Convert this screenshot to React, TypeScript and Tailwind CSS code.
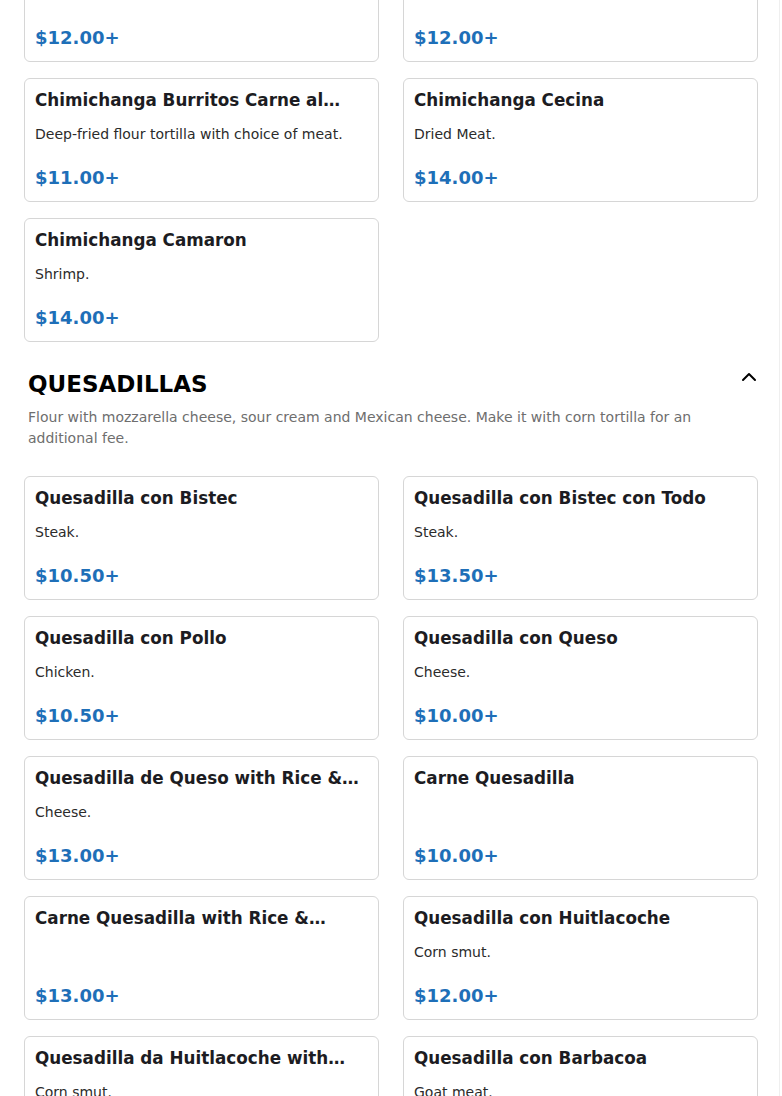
import React from 'react';
import { ChevronUp } from 'lucide-react';

type MenuItem = {
  name: string;
  description?: string;
  price: string;
};

type MenuSection = {
  title?: string;
  description?: string;
  items: MenuItem[];
};

const sections: MenuSection[] = [
  {
    items: [
      { name: 'Chimichanga de Pollo', description: 'Chicken.', price: '$12.00+' },
      { name: 'Chimichanga de Bistec', description: 'Steak.', price: '$12.00+' },
      {
        name: 'Chimichanga Burritos Carne al Pastor',
        description: 'Deep-fried flour tortilla with choice of meat.',
        price: '$11.00+'
      },
      { name: 'Chimichanga Cecina', description: 'Dried Meat.', price: '$14.00+' },
      { name: 'Chimichanga Camaron', description: 'Shrimp.', price: '$14.00+' }
    ]
  },
  {
    title: 'QUESADILLAS',
    description:
      'Flour with mozzarella cheese, sour cream and Mexican cheese. Make it with corn tortilla for an additional fee.',
    items: [
      { name: 'Quesadilla con Bistec', description: 'Steak.', price: '$10.50+' },
      { name: 'Quesadilla con Bistec con Todo', description: 'Steak.', price: '$13.50+' },
      { name: 'Quesadilla con Pollo', description: 'Chicken.', price: '$10.50+' },
      { name: 'Quesadilla con Queso', description: 'Cheese.', price: '$10.00+' },
      { name: 'Quesadilla de Queso with Rice & Beans', description: 'Cheese.', price: '$13.00+' },
      { name: 'Carne Quesadilla', price: '$10.00+' },
      { name: 'Carne Quesadilla with Rice & Beans', price: '$13.00+' },
      { name: 'Quesadilla con Huitlacoche', description: 'Corn smut.', price: '$12.00+' },
      { name: 'Quesadilla da Huitlacoche with Rice & Beans', description: 'Corn smut.', price: '$15.00+' },
      { name: 'Quesadilla con Barbacoa', description: 'Goat meat.', price: '$13.00+' }
    ]
  }
];

function MenuItemCard({ item }: { item: MenuItem }) {
  return (
    <div className="flex h-[124px] min-w-0 flex-col rounded-md border border-[#d6d6d6] bg-white px-[10px] pb-[12px] pt-[11px]">
      <p className="line-clamp-1 text-[16.8px] font-bold leading-[20px] text-[#1c1c22]">{item.name}</p>
      {item.description ? (
        <p className="mt-[14px] line-clamp-1 text-[14px] leading-[20px] text-[#2b2b2b]">{item.description}</p>
      ) : null}
      <p className="mt-auto text-[18px] font-bold leading-[22px] text-[#1e6fb8]">{item.price}</p>
    </div>
  );
}

function MenuSectionBlock({ section }: { section: MenuSection }) {
  return (
    <section>
      {section.title ? (
        <div className="mt-[28px] pl-1">
          <div className="flex items-center justify-between">
            <h2 className="text-[23px] font-bold leading-[28px] text-black">{section.title}</h2>
            <ChevronUp size={24} strokeWidth={2} className="mr-[-3px] -translate-y-[7px] text-black" />
          </div>
          {section.description ? (
            <p className="mt-[9px] max-w-[726px] text-[14px] leading-[21px] text-[#6e6e6e]">
              {section.description}
            </p>
          ) : null}
        </div>
      ) : null}
      <div className={`grid grid-cols-2 gap-x-6 gap-y-4 ${section.title ? 'mt-[27px]' : ''}`}>
        {section.items.map((item) => (
          <MenuItemCard key={item.name} item={item} />
        ))}
      </div>
    </section>
  );
}

export default function App() {
  return (
    <div className="h-[1096px] overflow-hidden bg-white" style={{ fontFamily: '"DejaVu Sans", Verdana, sans-serif' }}>
      <div className="flex">
        <main className="w-[780px] border-r border-[#efefef] pl-6 pr-[21px]">
          <div className="-mt-[62px]">
            {sections.map((section, i) => (
              <MenuSectionBlock key={section.title ?? i} section={section} />
            ))}
          </div>
        </main>
      </div>
    </div>
  );
}
